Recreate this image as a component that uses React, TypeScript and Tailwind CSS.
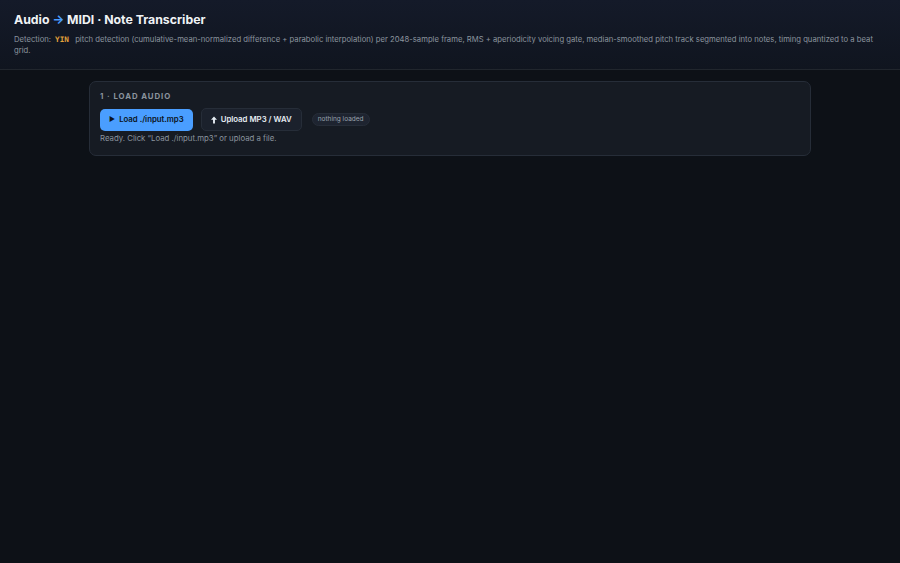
import React, { useState } from "react";

export default function App() {
  const [status] = useState("Ready. Click \u201cLoad ./input.mp3\u201d or upload a file.");

  return (
    <div className="min-h-screen bg-[#0d1117] text-[#e6edf3]" style={{ fontFamily: "Inter, 'Liberation Sans', sans-serif" }}>
      <header className="bg-gradient-to-b from-[#141a29] to-[#10151f] border-b border-[#21262d] px-[14px] pt-[12px] pb-[13px]">
        <h1 className="text-[12.3px] font-bold leading-[16px] text-[#f0f3f6]">
          Audio <span className="text-[#4a9eff]">→</span> MIDI · Note Transcriber
        </h1>
        <p className="mt-[6px] text-[7.7px] leading-[11px] text-[#8b949e]">
          Detection:
          <code className="mx-[4px] font-bold text-[#e3a23b]" style={{ fontFamily: "'DejaVu Sans Mono', monospace" }}>
            YIN
          </code>
          {" "}pitch detection (cumulative-mean-normalized difference + parabolic interpolation) per 2048-sample frame, RMS + aperiodicity voicing gate, median-smoothed pitch track segmented into notes, timing quantized to a beat grid.
        </p>
      </header>

      <main className="mx-auto mt-[11px] w-[722px]">
        <section className="rounded-[7px] border border-[#262d38] bg-[#161b23] px-[10px] pt-[9px] pb-[11px]">
          <h2 className="text-[7.8px] font-bold uppercase leading-[10px] tracking-[0.12em] text-[#8b949e]">1 · Load Audio</h2>
          <div className="mt-[7px] flex items-center gap-[8px]">
            <button className="flex h-[22px] items-center gap-[4px] rounded-[5px] bg-[#4a9eff] px-[9px] text-[7.8px] font-semibold text-[#0b1320]">
              <span className="text-[6.5px]">▶</span> Load ./input.mp3
            </button>
            <button className="flex h-[23px] items-center gap-[4px] rounded-[5px] border border-[#262d38] bg-[#1b212c] px-[9px] text-[7.8px] font-semibold text-[#e6edf3]">
              <svg width="6" height="8" viewBox="0 0 7 8" fill="currentColor">
                <path d="M3.5 0 L7 3.6 H4.6 V8 H2.4 V3.6 H0 Z" />
              </svg>
              Upload MP3 / WAV
            </button>
            <span className="ml-[2px] rounded-full border border-[#262d38] bg-[#1e2430] px-[5px] text-[6.5px] leading-[11px] text-[#9aa3ad]">
              nothing loaded
            </span>
          </div>
          <div className="mt-[2px] text-[7.8px] leading-[11px] text-[#8b949e]">{status}</div>
        </section>
      </main>
    </div>
  );
}
